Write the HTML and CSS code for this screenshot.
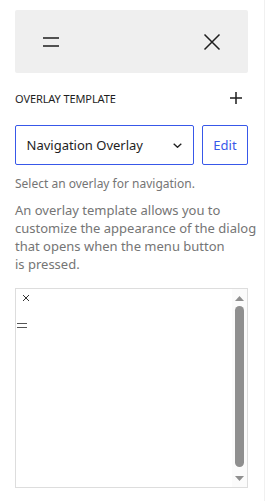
FILE: index.html
```html
<!DOCTYPE html>
<html>
<head>
<meta charset="utf-8">
<link rel="stylesheet" href="styles.css">
</head>
<body>
<div class="panel">
  <div class="preview">
    <svg class="icon" width="24" height="24" viewBox="0 0 24 24"><path d="M4 8h16M4 16h16" stroke="#1e1e1e" stroke-width="1.5" fill="none"/></svg>
    <svg class="icon" width="24" height="24" viewBox="0 0 24 24"><path d="M4.5 4.5l15 15M19.5 4.5l-15 15" stroke="#1e1e1e" stroke-width="1.5" fill="none"/></svg>
  </div>
  <div class="header">
    <span class="label">OVERLAY TEMPLATE</span>
    <svg class="icon" width="24" height="24" viewBox="0 0 24 24"><path d="M12 6v12M6 12h12" stroke="#1e1e1e" stroke-width="1.5" fill="none"/></svg>
  </div>
  <div class="controls">
    <div class="select">
      <span>Navigation Overlay</span>
      <svg width="9" height="5" viewBox="0 0 9 5"><path d="M0.7 0.7l3.8 3.6 3.8-3.6" stroke="#1e1e1e" stroke-width="1.3" fill="none"/></svg>
    </div>
    <div class="edit">Edit</div>
  </div>
  <p class="help">Select an overlay for navigation.</p>
  <p class="desc">An overlay template allows you to<br>customize the appearance of the dialog<br>that opens when the menu button<br>is pressed.</p>
  <div class="frame">
    <div class="frame-content">
      <svg class="mini-close" width="10" height="10" viewBox="0 0 10 10"><path d="M2 2l6 6M8 2l-6 6" stroke="#333" stroke-width="1" fill="none"/></svg>
      <svg class="mini-menu" width="10" height="6" viewBox="0 0 10 6"><path d="M0 0.5h10M0 4.5h10" stroke="#555" stroke-width="1.2" fill="none"/></svg>
    </div>
    <div class="scrollbar">
      <svg width="15" height="17" viewBox="0 0 15 17"><path d="M3 12L7.5 7 12 12z" fill="#8f8f8f"/></svg>
      <div class="thumb"></div>
      <svg width="15" height="20" viewBox="0 0 15 20"><path d="M3 9L7.5 14 12 9z" fill="#8f8f8f"/></svg>
    </div>
  </div>
</div>
</body>
</html>
```
FILE: styles.css
```css
html, body {
  margin: 0;
  padding: 0;
  background: #fff;
}
body {
  width: 264px;
  height: 501px;
  border-right: 1px solid #f0f0f0;
  font-family: "Noto Sans", "Open Sans", sans-serif;
  color: #1e1e1e;
}
.panel {
  padding: 10px 16px 0 15px;
}
.preview {
  height: 63px;
  background: #efefef;
  border-radius: 2px;
  display: flex;
  align-items: center;
  justify-content: space-between;
  padding: 0 24px;
}
.icon {
  display: block;
}
.header {
  margin-top: 13px;
  height: 24px;
  display: flex;
  align-items: center;
  justify-content: space-between;
}
.label {
  font-size: 11px;
  font-weight: 400;
  letter-spacing: -0.1px;
}
.controls {
  margin-top: 15px;
  display: flex;
  gap: 8px;
  height: 40px;
}
.select {
  flex: 1;
  box-sizing: border-box;
  border: 1.5px solid #3858e9;
  border-radius: 2px;
  display: flex;
  align-items: center;
  justify-content: space-between;
  padding: 0 11.5px 0 10.5px;
  font-size: 13px;
}
.edit {
  width: 46px;
  box-sizing: border-box;
  border: 1px solid #3858e9;
  border-radius: 2px;
  display: flex;
  align-items: center;
  justify-content: center;
  color: #3858e9;
  font-size: 13px;
}
.help {
  margin: 11px 0 0;
  font-size: 12px;
  line-height: 16px;
  color: #757575;
}
.desc {
  margin: 9px 0 0;
  font-size: 13px;
  line-height: 18px;
  color: #757575;
  white-space: nowrap;
}
.frame {
  margin-top: 15px;
  height: 200px;
  box-sizing: border-box;
  border: 1px solid #dddddd;
  display: flex;
}
.frame-content {
  flex: 1;
  display: flex;
  flex-direction: column;
  align-items: flex-start;
  padding-top: 4px;
}
.mini-close {
  margin-left: 5px;
}
.mini-menu {
  margin-left: 1px;
  margin-top: 20px;
}
.scrollbar {
  width: 15px;
  display: flex;
  flex-direction: column;
  align-items: center;
  background: #fbfbfb;
}
.thumb {
  flex: 1;
  width: 9px;
  border-radius: 5px;
  background: #8f8f8f;
}
```
